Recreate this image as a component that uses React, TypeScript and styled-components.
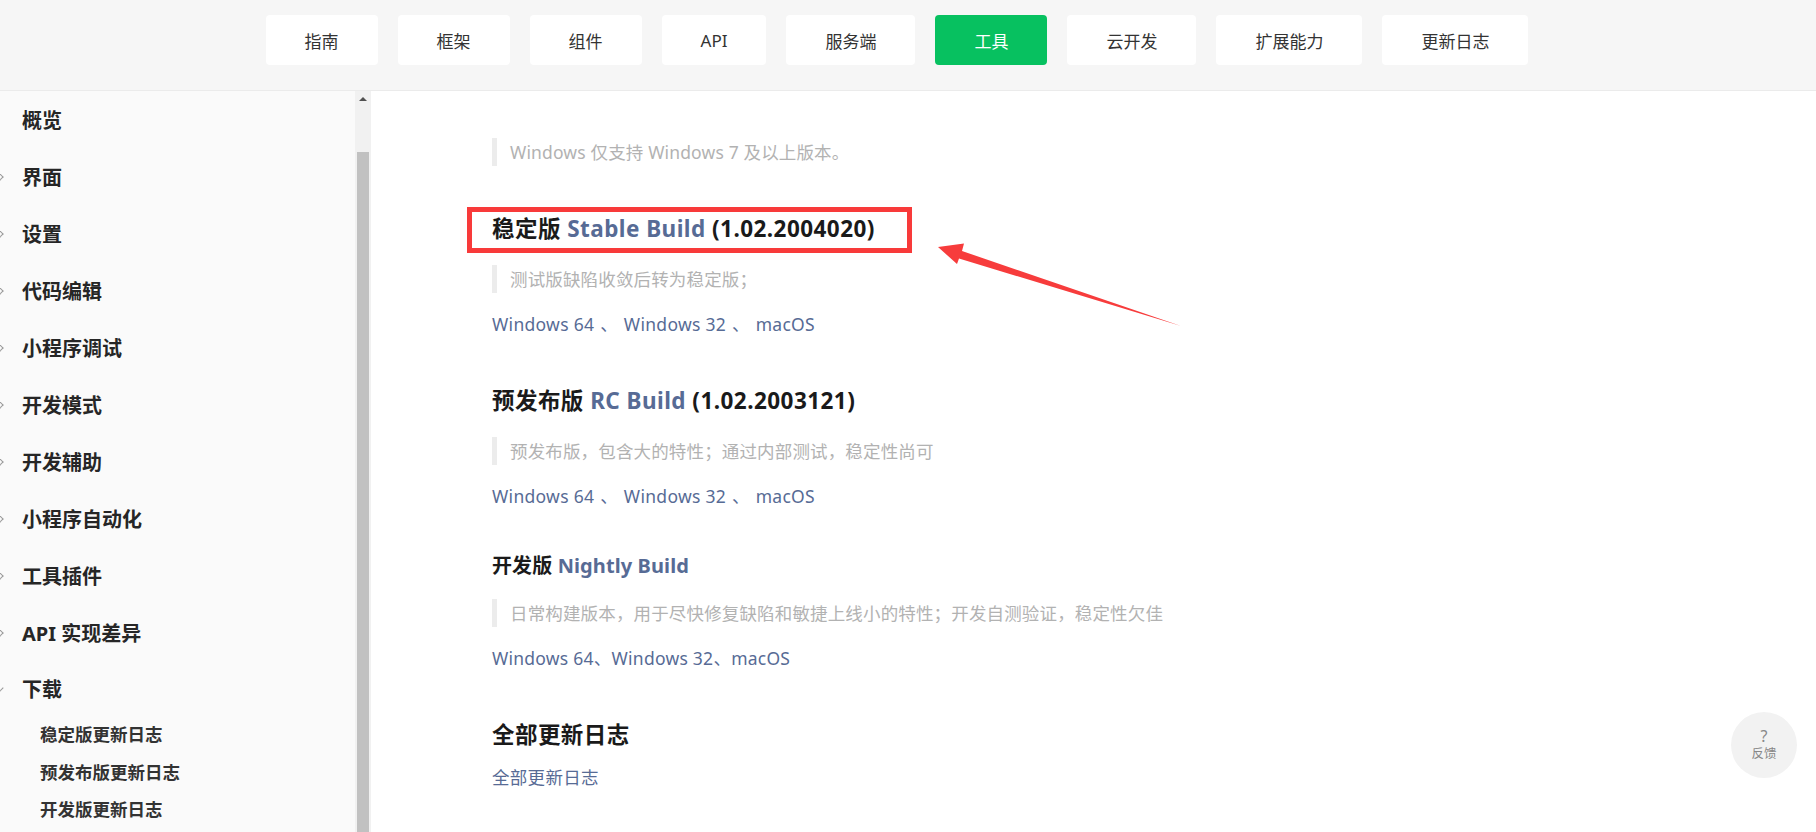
import React from 'react';
import styled, {createGlobalStyle} from 'styled-components';

const GlobalStyle = createGlobalStyle`
  * {
    box-sizing: border-box;
  }

  body {
    margin: 0;
    font-family: "Noto Sans", "Noto Sans CJK SC", sans-serif;
    color: #222;
    background: #fff;
  }
`

const navItems = ['指南', '框架', '组件', 'API', '服务端', '工具', '云开发', '扩展能力', '更新日志']

type SideItem = {
    title: string
    arrow: 'none' | 'right' | 'down'
    children?: string[]
}

const sideItems: SideItem[] = [
    {title: '概览', arrow: 'none'},
    {title: '界面', arrow: 'right'},
    {title: '设置', arrow: 'right'},
    {title: '代码编辑', arrow: 'right'},
    {title: '小程序调试', arrow: 'right'},
    {title: '开发模式', arrow: 'right'},
    {title: '开发辅助', arrow: 'right'},
    {title: '小程序自动化', arrow: 'right'},
    {title: '工具插件', arrow: 'right'},
    {title: 'API 实现差异', arrow: 'right'},
    {title: '下载', arrow: 'down', children: ['稳定版更新日志', '预发布版更新日志', '开发版更新日志']},
]

type BuildType = {
    label: string
    name: string
    version?: string
    note: string
    small?: boolean
    compact?: boolean
    marked?: boolean
}

const builds: BuildType[] = [
    {label: '稳定版', name: 'Stable Build', version: '(1.02.2004020)', note: '测试版缺陷收敛后转为稳定版；', marked: true},
    {label: '预发布版', name: 'RC Build', version: '(1.02.2003121)', note: '预发布版，包含大的特性；通过内部测试，稳定性尚可'},
    {label: '开发版', name: 'Nightly Build', note: '日常构建版本，用于尽快修复缺陷和敏捷上线小的特性；开发自测验证，稳定性欠佳', small: true, compact: true},
]

const Downloads = ({compact}: { compact?: boolean }) => {
    const links = ['Windows 64', 'Windows 32', 'macOS']
    return (
        <Links $compact={compact}>
            {links.map((l, i) => (
                <React.Fragment key={l}>
                    <LinkText href={'#'}>{l}</LinkText>
                    {i < links.length - 1 && <Sep $compact={compact}>{compact ? '、' : ' 、 '}</Sep>}
                </React.Fragment>
            ))}
        </Links>
    )
}

export default function App() {
    return (
        <Page>
            <GlobalStyle/>
            <TopBar>
                {navItems.map(item => (
                    <NavButton key={item} $active={item === '工具'}>{item}</NavButton>
                ))}
            </TopBar>

            <Body>
                <Sidebar>
                    <SideNav>
                        {sideItems.map(item => (
                            <SideGroup key={item.title}>
                                <SideItemRow $hasChildren={!!item.children}>
                                    <Chevron $arrow={item.arrow}/>
                                    {item.title}
                                </SideItemRow>
                                {item.children && item.children.map(c => (
                                    <SubItem key={c}>{c}</SubItem>
                                ))}
                            </SideGroup>
                        ))}
                    </SideNav>
                    <ScrollTrack>
                        <ScrollArrow/>
                        <ScrollThumb/>
                    </ScrollTrack>
                </Sidebar>

                <Main>
                    <Quote>Windows 仅支持 Windows 7 及以上版本。</Quote>

                    {builds.map(b => (
                        <Section key={b.name}>
                            <Heading $small={b.small}>
                                {b.label} <Accent>{b.name}</Accent>{b.version && <> {b.version}</>}
                                {b.marked && <MarkBox/>}
                            </Heading>
                            <Quote $top={b.small ? 18 : 20}>{b.note}</Quote>
                            <Downloads compact={b.compact}/>
                        </Section>
                    ))}

                    <Section>
                        <Heading>全部更新日志</Heading>
                        <Links $top={12}>
                            <LinkText href={'#'}>全部更新日志</LinkText>
                        </Links>
                    </Section>
                </Main>
            </Body>

            <Arrow width="260" height="95" viewBox="0 0 260 95">
                <polygon points="8,9 34,5.5 32,13 251,88 29,20.5 27,26" fill="#f73c3c"/>
            </Arrow>

            <Feedback>
                <FeedbackMark>?</FeedbackMark>
                <FeedbackText>反馈</FeedbackText>
            </Feedback>
        </Page>
    )
}

const Page = styled.div`
  position: relative;
  width: 1816px;
  height: 832px;
  overflow: hidden;
  display: flex;
  flex-direction: column;
`

const TopBar = styled.header`
  height: 91px;
  flex-shrink: 0;
  background: #f6f6f6;
  border-bottom: 1px solid #ebebeb;
  display: flex;
  justify-content: center;
  align-items: flex-start;
  gap: 20px;
  padding: 15px 22px 0 0;
`

const NavButton = styled.div<{ $active?: boolean }>`
  height: 50px;
  padding: 0 39px;
  border-radius: 4px;
  display: flex;
  align-items: center;
  font-size: 17px;
  color: ${props => props.$active ? '#fff' : '#333'};
  background: ${props => props.$active ? '#07c160' : '#fff'};
`

const Body = styled.div`
  flex: 1;
  display: flex;
  min-height: 0;
`

const Sidebar = styled.aside`
  width: 371px;
  flex-shrink: 0;
  display: flex;
  background: #fafafa;
`

const SideNav = styled.nav`
  flex: 1;
  overflow: hidden;
`

const SideGroup = styled.div`
`

const SideItemRow = styled.div<{ $hasChildren?: boolean }>`
  height: ${props => props.$hasChildren ? '54px' : '57px'};
  display: flex;
  align-items: center;
  font-size: 20px;
  font-weight: 700;
  color: #262626;
`

const Chevron = styled.span<{ $arrow: 'none' | 'right' | 'down' }>`
  width: 8px;
  height: 8px;
  margin-left: -6px;
  margin-right: 20px;
  border-right: 1.5px solid #999;
  border-bottom: 1.5px solid #999;
  transform: rotate(${props => props.$arrow === 'down' ? '45deg' : '-45deg'});
  visibility: ${props => props.$arrow === 'none' ? 'hidden' : 'visible'};
`

const SubItem = styled.div`
  height: 37.5px;
  display: flex;
  align-items: center;
  padding-left: 40px;
  font-size: 17.5px;
  font-weight: 700;
  color: #333;
`

const ScrollTrack = styled.div`
  width: 16px;
  background: #f1f1f1;
  display: flex;
  flex-direction: column;
  align-items: center;
`

const ScrollArrow = styled.div`
  margin-top: 6px;
  width: 0;
  height: 0;
  border-left: 4px solid transparent;
  border-right: 4px solid transparent;
  border-bottom: 4px solid #505050;
`

const ScrollThumb = styled.div`
  margin-top: 51px;
  width: 12px;
  flex: 1;
  background: #c1c1c1;
`

const Main = styled.main`
  flex: 1;
  padding: 47px 0 0 121px;
  background: #fff;
`

const Section = styled.section`
`

const Heading = styled.h2<{ $small?: boolean }>`
  position: relative;
  display: inline-block;
  margin: ${props => props.$small ? '41px 0 0' : '47px 0 0'};
  font-size: ${props => props.$small ? '20px' : '22.5px'};
  line-height: ${props => props.$small ? '30px' : '32px'};
  letter-spacing: ${props => props.$small ? '0.1px' : '0.45px'};
  font-weight: 700;
  color: #1a1a1a;
  white-space: nowrap;
`

const Accent = styled.span`
  color: #576b95;
`

const MarkBox = styled.span`
  position: absolute;
  left: -25px;
  top: -6px;
  width: 445px;
  height: 46px;
  border: 5px solid #f83a3a;
`

const Quote = styled.blockquote<{ $top?: number }>`
  margin: ${props => props.$top ?? 0}px 0 0;
  height: 28px;
  border-left: 5px solid #ececec;
  padding-left: 13px;
  font-size: 17.5px;
  line-height: 28px;
  letter-spacing: 0.15px;
  color: #b2b2b2;
  white-space: nowrap;
`

const Links = styled.p<{ $top?: number, $compact?: boolean }>`
  margin: ${props => props.$top ?? 17}px 0 0;
  font-size: 17.5px;
  line-height: 28px;
  letter-spacing: ${props => props.$compact ? '0.25px' : '0.3px'};
  color: #576b95;
  white-space: pre;
`

const LinkText = styled.a`
  color: #576b95;
  text-decoration: none;
`

const Sep = styled.span<{ $compact?: boolean }>`
  color: #576b95;
  margin: ${props => props.$compact ? '0' : '0 1px'};
`

const Arrow = styled.svg`
  position: absolute;
  left: 930px;
  top: 238px;
`

const Feedback = styled.div`
  position: absolute;
  right: 19px;
  bottom: 54px;
  width: 66px;
  height: 66px;
  border-radius: 50%;
  background: #f2f2f2;
  display: flex;
  flex-direction: column;
  align-items: center;
  justify-content: center;
  color: #888;
`

const FeedbackMark = styled.span`
  font-size: 16px;
  line-height: 18px;
`

const FeedbackText = styled.span`
  font-size: 12.5px;
  line-height: 18px;
`
